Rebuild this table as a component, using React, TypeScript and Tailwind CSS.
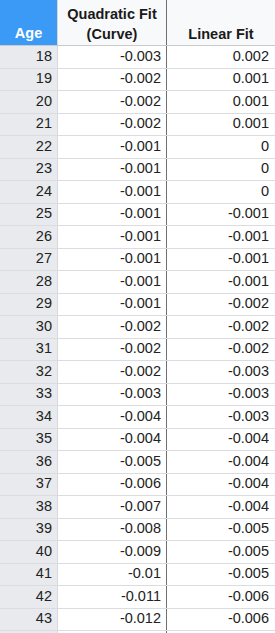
import React from "react";

const ages = Array.from({ length: 26 }, (_, i) => 18 + i);
const quad = [
  "-0.003","-0.002","-0.002","-0.002","-0.001","-0.001","-0.001","-0.001","-0.001","-0.001","-0.001","-0.001","-0.002","-0.002","-0.002","-0.003","-0.004","-0.004","-0.005","-0.006","-0.007","-0.008","-0.009","-0.01","-0.011","-0.012",
];
const lin = [
  "0.002","0.001","0.001","0.001","0","0","0","-0.001","-0.001","-0.001","-0.001","-0.002","-0.002","-0.002","-0.003","-0.003","-0.003","-0.004","-0.004","-0.004","-0.004","-0.005","-0.005","-0.005","-0.006","-0.006",
];

export default function App() {
  const rows = ages.map((a, i) => ({ a: String(a), q: quad[i], l: lin[i] }));
  rows.push({ a: "", q: "", l: "" });
  return (
    <div
      className="w-[275px] h-[633px] overflow-hidden bg-white text-[#222222]"
      style={{ fontFamily: '"Liberation Sans", Arial, sans-serif' }}
    >
      <div className="flex h-[46px] border-b border-[#c8cacd] box-border">
        <div className="w-[58px] shrink-0 bg-[#3b9af6] border-r border-[#d6d8db] flex items-end justify-center pb-[2px] text-white font-bold text-[14.5px] leading-[20px]">
          Age
        </div>
        <div className="w-[109px] shrink-0 bg-[#f8f9fa] border-r border-[#707070] flex items-end justify-center pb-[1px] text-center font-bold text-[14.5px] leading-[20px] text-[#1a1a1a]">
          <span>
            Quadratic Fit
            <br />
            (Curve)
          </span>
        </div>
        <div className="flex-1 bg-[#f8f9fa] flex items-end justify-center pb-[1px] font-bold text-[14.5px] leading-[20px] text-[#1a1a1a]">
          Linear Fit
        </div>
      </div>
      {rows.map((r, i) => (
        <div key={i} className="flex h-[22.5px] border-b border-[#dadce0] box-border text-[14.5px]">
          <div className="w-[58px] shrink-0 bg-[#e8eaed] border-r border-[#d6d8db] flex items-center justify-end pr-[5px]">
            {r.a}
          </div>
          <div className="w-[109px] shrink-0 border-r border-[#707070] flex items-center justify-end pr-[5px]">
            {r.q}
          </div>
          <div className="flex-1 flex items-center justify-end pr-[6px]">{r.l}</div>
        </div>
      ))}
    </div>
  );
}
